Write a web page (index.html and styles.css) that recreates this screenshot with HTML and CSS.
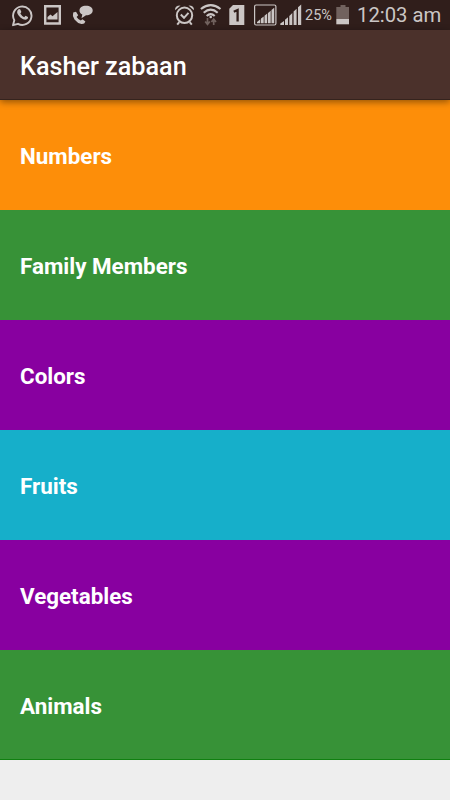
FILE: index.html
```html
<!DOCTYPE html>
<html lang="en">
<head>
<meta charset="utf-8">
<title>Kasher zabaan</title>
<link rel="stylesheet" href="styles.css">
</head>
<body>
<div class="status">
  <div class="notifications">
    <svg width="22" height="30" viewBox="12 0 22 30"><path d="M13 25.2 14.3 20.2A9.2 9.2 0 1 1 18 23.8Z" fill="none" stroke="currentColor" stroke-width="1.9" stroke-linejoin="round"/><path d="M18.2 9.6Q19.5 8.5 20.3 9.5L21.3 11.8Q21.4 12.5 20.3 13.6 21.7 16.2 24.2 17.2L25.5 15.8 28 17Q28.500 18.300 26.900 19.300 24.500 20.500 20.700 17.700 16.300 14 17.300 11.100 17.500 10.200 18.200 9.600Z" fill="currentColor"/></svg>
    <svg width="18" height="30" viewBox="44 0 18 30"><path d="M45.200 6.200H59.800V23.500H45.200Z" fill="none" stroke="currentColor" stroke-width="2.400"/><path d="M47.500 19.500V17L50.500 14.500 52.500 16.200 57.500 12V19.500Z" fill="currentColor"/></svg>
    <svg width="22" height="30" viewBox="72 0 22 30"><path d="M86 5.800C90 5.800 92.700 7.700 92.700 10.500S90 15.300 86 15.300L81.500 18.300 82.300 14.500C80.300 13.600 79.500 12.200 79.500 10.500 79.500 7.700 82 5.800 86 5.800Z" fill="currentColor"/><path d="M73.200 12.500 76 11.800 78.200 15.300 76.600 17Q78 19.400 80.800 20.500L82.500 19.300 85.400 21.500Q84.700 24.300 81.500 24.100 77.500 23.400 74.500 19.500 72 16 73.200 12.500Z" fill="currentColor"/></svg>
  </div>
  <div class="indicators">
    <svg width="22" height="30" viewBox="174 0 22 30"><g fill="none" stroke="currentColor" stroke-width="2"><circle cx="184.500" cy="15.300" r="7.700"/><path d="M180.800 14.500 184 17.800 188.500 12.800M179.300 22.200 177.200 24.700M189.700 22.200 191.800 24.700"/></g><path d="M175.200 10.300Q174.300 5.500 180.500 5.400ZM193.800 10.300Q194.700 5.500 188.500 5.400Z" fill="currentColor"/></svg>
    <svg width="22" height="30" viewBox="200 0 22 30"><g fill="none" stroke="currentColor" stroke-width="2.100"><path d="M200.900 9Q210.700 1.200 220.500 9M203.700 12.700Q210.700 6.700 217.700 12.700M206.700 16Q210.700 12.200 214.700 16"/></g><circle cx="210.700" cy="17" r="1.300" fill="currentColor"/><path d="M207.500 18V23M205.200 21.500 207.500 24.300 209.800 21.500M213.700 25V20M211.400 22 213.700 19.200 216 22" fill="none" stroke="#71625e" stroke-width="1.700"/></svg>
    <svg class="sim" width="17" height="30" viewBox="229 0 17 30"><path d="M233 5H244.300V25H229.300V8.700Z" fill="currentColor"/><path d="M233.800 11.800 237.600 10V21.500" fill="none" stroke="#301e1b" stroke-width="2.300"/></svg>
    <svg class="boxed" width="23" height="30" viewBox="254 0 23 30"><rect x="254.600" y="5" width="21.300" height="20" rx="1.500" fill="none" stroke="currentColor" stroke-width="1.200"/><path d="M257 23.200V22L260.300 19.300V23.200ZM261 23.200V18.600L263.700 16.400V23.200ZM264.500 23.200V15.800L267.200 13.600V23.200ZM268 23.200V12.900L270.700 10.700V23.200ZM271.500 23.200V10L274.200 7.800V23.200Z" fill="currentColor"/></svg>
    <svg width="22" height="30" viewBox="280 0 22 30"><path d="M280.300 25V23.500L284 21V25ZM285 25V19.700L288 17.200V25ZM289.300 25V16L292.300 13V25ZM293.600 25V11.500L296.600 8.800V25ZM298 25V7.200L301.200 4.500V25Z" fill="currentColor"/></svg>
    <span class="percent">25%</span>
    <svg class="battery" width="14" height="30" viewBox="336 0 14 30"><path d="M340.500 5H345.500V7H349V19H336.300V7H340.500Z" fill="#71625e"/><path d="M336.300 19H349V24.300H336.300Z" fill="currentColor"/></svg>
    <time class="time">12:03 am</time>
  </div>
</div>
<header class="toolbar"><h1>Kasher zabaan</h1></header>
<main>
  <div class="row numbers">Numbers</div>
  <div class="row family">Family Members</div>
  <div class="row colors">Colors</div>
  <div class="row fruits">Fruits</div>
  <div class="row vegetables">Vegetables</div>
  <div class="row animals">Animals</div>
</main>
</body>
</html>
```
FILE: styles.css
```css
* { box-sizing: border-box; }
body {
  margin: 0;
  height: 800px;
  overflow: hidden;
  background: #eee;
  font-family: Roboto, sans-serif;
  color: #fff;
}
.status {
  height: 30px;
  display: flex;
  justify-content: space-between;
  padding: 0 10px 0 12px;
  background: #301e1b;
  color: #cbc6c5;
}
.status svg { display: block; flex: none; }
.notifications { display: flex; gap: 10px; }
.indicators { display: flex; width: 266px; }
.indicators svg + svg { margin-left: 4px; }
.indicators svg.sim { margin-left: 7px; }
.indicators svg.boxed { margin-left: 8px; }
.indicators .boxed + svg { margin-left: 3px; }
.percent {
  flex: none;
  width: 28px;
  margin-left: 3px;
  font-size: 14.5px;
  line-height: 31px;
}
.battery { margin-left: 3px; }
.time {
  flex: none;
  margin-left: 7px;
  font-size: 20.3px;
  line-height: 31px;
  white-space: nowrap;
}
.toolbar {
  position: relative;
  height: 70px;
  display: flex;
  align-items: center;
  padding: 5px 20px 0;
  background: #4b312b;
  border-bottom: 1px solid #35231d;
  box-shadow: 0 2px 7px rgba(0, 0, 0, .42);
}
h1 { margin: 0; font-size: 25.2px; line-height: 30px; font-weight: 500; }
.row {
  height: 110px;
  display: flex;
  align-items: center;
  padding: 2px 20px 0;
  font-size: 22.4px;
  font-weight: 700;
}
.numbers { background: #fd8e09; }
.family, .animals { background: #379237; }
.colors, .vegetables { background: #8800a0; }
.fruits { background: #16afca; }
.animals { border-bottom: 1px solid #108010; }
```
